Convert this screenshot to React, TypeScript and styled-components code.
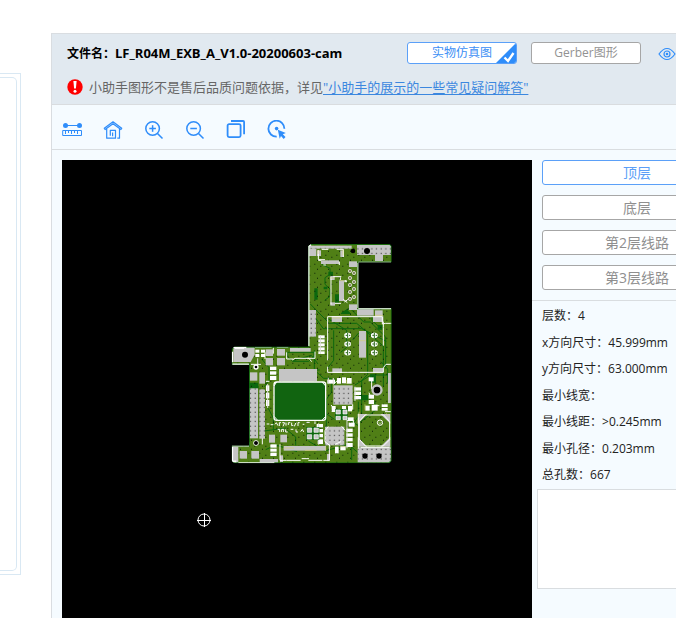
import React, { useState } from "react";
import styled, { createGlobalStyle } from "styled-components";

const latin = `"Open Sans", "Noto Sans CJK SC", sans-serif`;

const GlobalStyle = createGlobalStyle`
  * { box-sizing: border-box; }
  body { margin: 0; background: #fff; font-family: ${latin}; font-size: 12px; color: #222; }
  button { font-family: inherit; cursor: pointer; }
`;

const Page = styled.div`
  display: grid;
  grid-template-columns: 51px minmax(0, 1fr);
  height: 100vh;
  overflow: hidden;
`;

const LeftFrame = styled.aside`
  width: 21px;
  height: 502px;
  margin-top: 73px;
  padding: 3px 3px 3px 0;
  border: 1px solid #d9e8f3;
  border-left: 0;
`;

const LeftInner = styled.div`
  height: 100%;
  border: 1px solid #d9e8f3;
  border-left: 0;
  border-radius: 0 5px 5px 0;
`;

const Panel = styled.main`
  display: flex;
  flex-direction: column;
  margin-top: 33px;
  min-width: 0;
  overflow: hidden;
  background: #f5fbff;
  border: 1px solid #d9dde1;
  border-width: 1px 0 0 1px;
`;

const Header = styled.header`
  flex: none;
  height: 71px;
  padding: 8px 0 0 15px;
  background: #e1e9f0;
  border-bottom: 1px solid #d9dcdf;
`;

const TitleRow = styled.div`
  display: flex;
  align-items: center;
  height: 22px;
`;

const Title = styled.h1`
  flex: 1;
  margin: 0;
  font-size: 12px;
  line-height: 20px;
  font-weight: 700;
  color: #000;
  white-space: nowrap;
`;

const FileName = styled.span`
  font-size: 13px;
`;

const ViewButton = styled.button<{ $active: boolean }>`
  position: relative;
  flex: none;
  width: 110px;
  height: 22px;
  margin-right: 14px;
  padding: 0;
  overflow: hidden;
  font-size: 12px;
  line-height: 20px;
  color: ${(p) => (p.$active ? "#3d8ff5" : "#929292")};
  background: #fff;
  border: 1px solid ${(p) => (p.$active ? "#5ba0f8" : "#a6a6a6")};
  border-radius: 3px;
`;

const Corner = styled.svg`
  position: absolute;
  right: 0;
  bottom: 0;
`;

const IconButton = styled.button`
  display: block;
  padding: 0;
  border: 0;
  background: none;
  color: #2f8dfa;
  line-height: 0;
`;

const EyeButton = styled(IconButton)`
  margin: 1px 0 0 3px;
`;

const Notice = styled.p`
  display: flex;
  align-items: center;
  gap: 6px;
  margin: 13px 0 0;
  font-size: 13px;
  line-height: 20px;
  color: #666;
  white-space: nowrap;

  a { color: #3b87df; text-underline-offset: 2px; }
`;

const Toolbar = styled.nav`
  flex: none;
  display: flex;
  align-items: center;
  gap: 21px;
  height: 45px;
  padding: 6px 10px 0;
  border-bottom: 1px solid #d9dde0;
`;

const Workspace = styled.div`
  display: flex;
  flex: 1;
  min-height: 0;
  margin-right: -66px;
  padding: 10px 0 0 10px;
`;

const Stage = styled.section`
  flex: 1;
  min-width: 0;
  overflow: hidden;
  background: #000;

  svg { display: block; }
`;

const Sidebar = styled.aside`
  flex: 0 0 210px;
`;

const Layers = styled.div`
  display: grid;
  gap: 10px;
  padding: 0 10px;
  margin-bottom: 10px;
`;

const LayerButton = styled.button<{ $active: boolean }>`
  height: 25px;
  padding: 0;
  font-size: 14px;
  line-height: 22px;
  color: ${(p) => (p.$active ? "#5c9ff7" : "#8f8f8f")};
  background: #fff;
  border: 1px solid ${(p) => (p.$active ? "#5ba0f8" : "#a6a6a6")};
  border-radius: 3px;
`;

const Info = styled.dl`
  display: flex;
  flex-direction: column;
  justify-content: space-between;
  height: 189px;
  margin: 0;
  padding: 4px 10px 3px;
  border-top: 1px solid #d9dde0;
`;

const InfoRow = styled.div`
  display: flex;
  line-height: 22px;
  white-space: nowrap;

  dd { margin: 0; }
`;

const Preview = styled.div`
  height: 100px;
  margin: 0 0 0 5px;
  background: #fff;
  border: 1px solid #d9dde0;
`;

type Box = [number, number, number, number];

const Boxes = ({ items, fill }: { items: Box[]; fill: string }) => (
  <g fill={fill}>
    {items.map(([x, y, width, height]) => (
      <rect key={`${x}-${y}`} x={x} y={y} width={width} height={height} />
    ))}
  </g>
);

const topPads: Box[] = [
  [252, 32, 128, 9], [252, 40, 22, 23], [396, 30, 102, 30], [276, 46, 12, 17], [346, 46, 10, 20],
  [288, 76, 54, 11], [450, 60, 24, 18], [372, 79, 24, 17], [342, 136, 15, 62], [316, 123, 13, 12],
  [316, 202, 14, 10], [372, 208, 24, 17], [396, 222, 50, 20], [450, 226, 23, 17], [252, 225, 21, 80],
  [320, 243, 31, 18], [444, 244, 31, 17], [402, 288, 21, 80], [195, 339, 62, 11], [322, 400, 29, 14],
  [444, 399, 31, 14],
];

const lowerPads: Box[] = [
  [122, 28, 22, 20], [156, 27, 24, 20], [122, 54, 22, 22], [156, 54, 24, 22],
  [162, 87, 114, 37], [74, 97, 23, 25], [103, 97, 17, 34], [72, 145, 27, 150], [103, 148, 17, 148],
  [325, 136, 58, 58], [300, 260, 58, 56], [489, 99, 9, 90], [398, 322, 100, 46], [22, 320, 18, 48],
  [44, 333, 22, 23], [79, 333, 23, 23], [132, 284, 18, 24], [166, 284, 20, 23], [176, 318, 127, 14],
  [104, 357, 55, 11], [165, 346, 9, 20], [306, 342, 9, 20],
];

const whitePads: Box[] = [
  [91, 29, 12, 9], [108, 29, 12, 9], [91, 42, 12, 9], [108, 42, 12, 9],
  [280, -14, 19, 9], [280, -2, 19, 9], [280, 10, 19, 9], [280, 22, 19, 9], [280, 34, 19, 8],
  [135, 80, 19, 10], [135, 94, 19, 10], [135, 108, 19, 12],
  [123, 136, 10, 17], [123, 158, 10, 17], [123, 180, 10, 18],
  [307, 119, 23, 12], [336, 114, 12, 17], [351, 112, 12, 18], [366, 114, 14, 17],
  [388, 142, 20, 10], [388, 155, 20, 10], [388, 168, 20, 10],
  [431, 112, 15, 12], [431, 164, 16, 12], [431, 180, 16, 12], [421, 197, 13, 15], [440, 194, 18, 18],
  [470, 193, 18, 8], [470, 204, 18, 8], [320, 198, 12, 18], [351, 198, 12, 12], [369, 198, 12, 16],
  [275, 252, 19, 10], [278, 267, 16, 10], [278, 282, 16, 10], [278, 298, 16, 14],
  [366, 232, 20, 11], [371, 248, 18, 12], [364, 266, 19, 10], [364, 280, 19, 10], [364, 294, 19, 10],
  [364, 309, 19, 12], [136, 313, 19, 10], [136, 326, 19, 9], [136, 338, 19, 10],
  [346, 319, 16, 12], [330, 320, 11, 20],
];

const blackHoles: [number, number, number][] = [
  [384, 48, 7], [426, 48, 9], [60, 359, 9], [456, 465, 10], [93, 624, 6], [93, 396, 4], [420, 663, 8], [462, 663, 8],
];

const vias: [number, number][] = [
  [375, 108], [387, 114], [375, 129], [387, 141], [375, 150], [387, 162], [375, 171], [387, 186], [375, 192],
];

const contacts: [number, number][] = [
  [368, 301], [448, 301], [368, 327], [448, 327], [368, 353], [448, 353],
];

const outline =
  "M250 33 L258 27 H494 L500 33 V82 H400 V220 H500 V677 L492 685 H28 L20 677 V632 H72 V389 H20 V343 L28 335 H250 Z";

const Board = () => (
  <svg width="470" height="458" viewBox="62 160 470 458" role="img" aria-label="PCB">
    <defs>
      <pattern id="drill" width="33" height="27" patternUnits="userSpaceOnUse">
        <path d="M4 5h3v3h-3zM22 11h3v3h-3zM12 20h3v3h-3z" fill="#071d05" />
      </pattern>
      <pattern id="padDrill" width="14" height="14" patternUnits="userSpaceOnUse">
        <rect x="5" y="5" width="3" height="3" fill="#171717" />
      </pattern>
      <clipPath id="boardShape"><path d={outline} /></clipPath>
    </defs>
    <g transform="translate(225 235) scale(.3333333)">
      <g clipPath="url(#boardShape)">
        <path d={outline} fill="#507f16" />
        <g fill="none" stroke="#0c680e" strokeWidth="3">
          <path d="M252 50l12 -8M290 88l25 12v18l-15 10v20l15 14v22l-16 12M256 207l22 23 35 35h82l80 68v120M270 247l25 34h115l74 38M350 235l24 -16 42 42h20l46 45v95M383 315l18 -21M326 286v90l-20 25M428 288v130l-18 19v102M268 345v60l28 25h23v43l-15 20v107M390 450l48 -30h58M110 372l22 26v38l-14 19M130 520l15 30v34M185 584l27 22v25M250 618l50 30 70 -20 35 30M400 500v43l-15 24M72 456h30M160 405h124M205 377l54 -16 20 26M450 499v28l-45 35M380 635v40M216 650l-64 -20 -30 14" />
          <path d="M441 220v37l30 25M307 250l58 36v51l-18 15M468 380l20 22v42M110 589l74 -10M330 430v21M400 572l-42 -27M296 530l32 23" />
          <path d="M187 352h80v12l-16 15h-48l-16 -15z" />
        </g>
        <g fill="#0c680e">
          <path d="M310 110h14v12h-14zM268 160h10v34h-10zM296 155h11v8h-11zM330 178h12v25h-12zM347 235l18 -12 14 14h-30zM458 270h14v14h-14zM72 443h28v18h-28z" />
          <path d="M435 418h18v25h-18zM402 480h28v16h-28z" />
        </g>
        <path d={outline} fill="url(#drill)" />
        <Boxes items={topPads} fill="#c5c5c5" />
        <path d="M25 337h64v22l-12 22H25z" fill="#c5c5c5" />
        <g transform="translate(0 315)">
          <Boxes items={lowerPads} fill="#c5c5c5" />
          <path d="M72 145h48v150H72zM300 260h58v56h-58zM325 136h58v58h-58zM398 322h100v46h-100zM252 -283h128v9h-128zM252 -90h21v80h-21zM396 -285h102v30h-102z" fill="url(#padDrill)" />
          <Boxes items={whitePads} fill="#fff" />
          <path d="M98 55v20M286 -15v57M310 113v16M325 114v16M128 132v72M390 140v43M281 250v64M366 235v90" fill="none" stroke="#ddd" strokeWidth="3" />

          <rect x="147" y="126" width="155" height="115" rx="8" fill="#116410" stroke="#fff" strokeWidth="4" />
          <path d="M155 126l-8 12M291 126l11 12M147 229l11 12M291 241l11 -12" stroke="#fff" strokeWidth="3" />
          <path d="M244 261h39v38h-39zM330 207h38v33h-38z" fill="#0c680e" />
          <g fill="#c8c8c8" stroke="#fff" strokeWidth="2">
            <path d="M247 264h13v13h-13zM267 264h13v13h-13zM247 284h13v13h-13zM267 284h13v13h-13zM333 210h13v12h-13zM354 210h12v12h-12zM333 229h13v10h-13zM354 229h12v10h-12z" />
          </g>
          <path d="M398 222h29l-29 29zM466 222h30v29zM398 291l29 29h-29zM466 320l30 -29v29z" fill="#c5c5c5" />
          <path d="M420 225h56l18 20v54l-19 19h-54l-18 -20v-54z" fill="none" stroke="#fff" strokeWidth="3" />
          <circle cx="465" cy="248" r="8" fill="none" stroke="#fff" strokeWidth="3" />
          <path d="M461 248l5 3 4 -5" fill="none" stroke="#ddd" strokeWidth="2" />
        </g>
        <g fill="none" stroke="#fff" strokeWidth="3">
          <path d="M280 45v29h20M290 43h20M335 43h20v23M280 76h9M343 80v10M295 90h8M318 126v83M325 125h24M346 127v8M330 205h18M358 137h7M355 193l12 10M308 376V245h164v22l10 -2h18M308 395v17h167v-14l8 -10h15M475 260v17M475 277v55" />
          <path d="M90 337h50M155 337h35M185 352v20h20M270 350v20h-22M202 375l8 -5h42l8 10M120 372v-20M145 338v18M30 340h27M78 388h30M123 439h10M72 632v-10M112 610v18M165 628v48h20M313 628v48h-18M185 676h42M250 676h42M230 671h22" />
          <path d="M325 448l15 -14M383 508v16M440 430v32M318 510l12 14M401 536v105M407 637h87M480 530h18M310 575l-10 12v33l16 13M350 574l10 12M385 574v-18M330 628l18 -8" />
          <path d="M125 567h8M137 569h8M150 568l4 -5 5 9M163 573v-10h5M172 563h7l-5 11M183 563v9M190 570v-7h6M200 563v9h5M213 563l-5 11M219 573v-10h5M233 568h5M244 562h10M158 583h6v8M170 591v-8h6v8M182 583v8h6M197 583h8M213 583v8h6M227 590l5 -7 4 8" />
          <path d="M358 140h8M371 192l-13 9M270 567v-8M432 473l6 15M455 512h8" />
        </g>
        <g stroke="#e8e8e8" strokeWidth="2">
          {vias.map(([x, y]) => (
            <g key={`${x}-${y}`}>
              <circle cx={x} cy={y} r="5" fill="#bcbb94" />
              <circle cx={x} cy={y} r="1" fill="#172f07" stroke="#243410" />
            </g>
          ))}
        </g>
        {contacts.map(([x, y]) => (
          <g key={`${x}-${y}`}>
            <path d={`M${x - 10} ${y - 4}q10 -9 20 0v8q-10 9 -20 0z`} fill="#fff" />
            <path d={`M${x - 6} ${y}h5M${x + 4} ${y}h4M${x} ${y - 8}v16`} stroke="#286716" strokeWidth="3" />
          </g>
        ))}
        <g fill="none" stroke="#d5ce79" strokeWidth="2">
          <path d="M279 45v12M354 45v16M346 137h10M317 129h12M322 249h24M449 241h25M403 317h19M175 639h32M240 646h35M302 635v13M346 635h16M420 508v20M365 435v12M402 530v17M483 535l10 10" />
        </g>
        {blackHoles.map(([x, y, r]) => (
          <g key={`${x}-${y}`}>
            {x === 456 && <circle cx={x} cy={y} r="17" fill="#c5c5c5" />}
            {x === 93 && <circle cx={x} cy={y} r="8" fill="#fff" />}
            <circle cx={x} cy={y} r={r} fill="#000" />
          </g>
        ))}
        <path d={outline} fill="none" stroke="#0c680e" strokeWidth="5" />
        <path d="M251 333V34l7 -5M400 84v135M400 220h98M400 83h98M24 337h40M22 350v32M22 388h50M20 632h52M22 636v43h12M40 684h108" fill="none" stroke="#fff" strokeWidth="5" />
      </g>
    </g>
    <g fill="none" stroke="#fff" strokeWidth="1">
      <circle cx="204" cy="520" r="6" />
      <path d="M197 520.5h14M204.5 513v14" shapeRendering="crispEdges" />
    </g>
  </svg>
);

const ToolIcon = ({ name }: { name: string }) => {
  switch (name) {
    case "测量":
      return (
        <svg width="20" height="20" viewBox="0 0 20 20" fill="none" stroke="currentColor">
          <path d="M3 5.5h14" />
          <circle cx="3.5" cy="5.5" r="2.5" fill="currentColor" stroke="none" />
          <circle cx="17.5" cy="5.5" r="2.5" fill="currentColor" stroke="none" />
          <path d="M.7 10.5h18.8v5H.7zM3.5 11v3M6.5 11v2M9.5 11v3M12.5 11v2M15.5 11v3" />
        </svg>
      );
    case "首页":
      return (
        <svg width="20" height="20" viewBox="0 0 20 20" fill="none" stroke="currentColor" strokeWidth="1.2" strokeLinejoin="round">
          <path d="M1.3 8.3l8.7 -6.5 8.7 6.5-.8 1.2-7.9-5.8-7.9 5.8z" />
          <path d="M3.7 9v9.2h8.8V10.4H7.3v5.3M9.6 12.6v3.6M16.5 9v9.2h-2.2" />
        </svg>
      );
    case "放大":
    case "缩小":
      return (
        <svg width="20" height="20" viewBox="0 0 20 20" fill="none" stroke="currentColor" strokeWidth="1.5">
          <circle cx="8.6" cy="8.5" r="6.8" />
          <path d="M13.5 13.5l5 5M5.3 8.5h6.6" />
          {name === "放大" && <path d="M8.6 5.2v6.6" />}
        </svg>
      );
    case "图层":
      return (
        <svg width="20" height="20" viewBox="0 0 20 20" fill="none" stroke="currentColor" strokeWidth="1.8">
          <rect x="1.6" y="4.1" width="13" height="13" rx="1.5" />
          <path d="M5 1h12.1q1 0 1 1v12.2" />
        </svg>
      );
    default:
      return (
        <svg width="20" height="20" viewBox="0 0 20 20" fill="none" stroke="currentColor" strokeWidth="1.8">
          <path d="M9.7 16.7A8 8 0 1 1 17.4 8.8" />
          <circle cx="9.6" cy="8.6" r="1.8" fill="currentColor" stroke="none" />
          <path d="M10.8 9.8l8 3.2-3 1.3 2.7 2.8-1.8 1.8-2.7-2.9-1.3 2.7z" fill="currentColor" stroke="none" />
        </svg>
      );
  }
};

const tools = ["测量", "首页", "放大", "缩小", "图层", "选择"];
const layers = ["顶层", "底层", "第2层线路", "第3层线路"];
const views = ["实物仿真图", "Gerber图形"];
const info: [string, string][] = [
  ["层数：", "4"],
  ["x方向尺寸：", "45.999mm"],
  ["y方向尺寸：", "63.000mm"],
  ["最小线宽：", ""],
  ["最小线距：", ">0.245mm"],
  ["最小孔径：", "0.203mm"],
  ["总孔数：", "667"],
];

export default function App() {
  const [view, setView] = useState(views[0]);
  const [layer, setLayer] = useState(layers[0]);

  return (
    <>
      <GlobalStyle />
      <Page>
        <LeftFrame><LeftInner /></LeftFrame>
        <Panel>
          <Header>
            <TitleRow>
              <Title>文件名：<FileName>LF_R04M_EXB_A_V1.0-20200603-cam</FileName></Title>
              {views.map((name) => (
                <ViewButton key={name} $active={view === name} aria-pressed={view === name} onClick={() => setView(name)}>
                  {name}
                  {view === name && (
                    <Corner width="20" height="20" viewBox="0 0 20 20">
                      <path d="M20 0v20H0z" fill="#2f8dfa" />
                      <path d="M8.5 14.5l3.5 3.5 5.5-8" fill="none" stroke="#fff" strokeWidth="2.4" />
                    </Corner>
                  )}
                </ViewButton>
              ))}
              <EyeButton aria-label="显示">
                <svg width="18" height="14" viewBox="0 0 18 14" fill="none" stroke="currentColor" strokeWidth="1.2">
                  <path d="M1 7q8-11 16 0q-8 11-16 0z" />
                  <circle cx="9" cy="7" r="3" />
                  <circle cx="9" cy="7" r=".7" />
                </svg>
              </EyeButton>
            </TitleRow>
            <Notice>
              <svg width="16" height="16" viewBox="0 0 16 16" aria-hidden="true">
                <circle cx="8" cy="8" r="7.7" fill="#f00" />
                <path d="M6.4 2h3.2L8.9 9.6H7.1z" fill="#fff" />
                <circle cx="8" cy="12.2" r="1.5" fill="#fff" />
              </svg>
              <span>
                小助手图形不是售后品质问题依据，详见<a href="#faq">"小助手的展示的一些常见疑问解答"</a>
              </span>
            </Notice>
          </Header>
          <Toolbar>
            {tools.map((name) => (
              <IconButton key={name} aria-label={name}><ToolIcon name={name} /></IconButton>
            ))}
          </Toolbar>
          <Workspace>
            <Stage><Board /></Stage>
            <Sidebar>
              <Layers>
                {layers.map((name) => (
                  <LayerButton key={name} $active={layer === name} aria-pressed={layer === name} onClick={() => setLayer(name)}>
                    {name}
                  </LayerButton>
                ))}
              </Layers>
              <Info>
                {info.map(([label, value]) => (
                  <InfoRow key={label}><dt>{label}</dt><dd>{value}</dd></InfoRow>
                ))}
              </Info>
              <Preview />
            </Sidebar>
          </Workspace>
        </Panel>
      </Page>
    </>
  );
}
